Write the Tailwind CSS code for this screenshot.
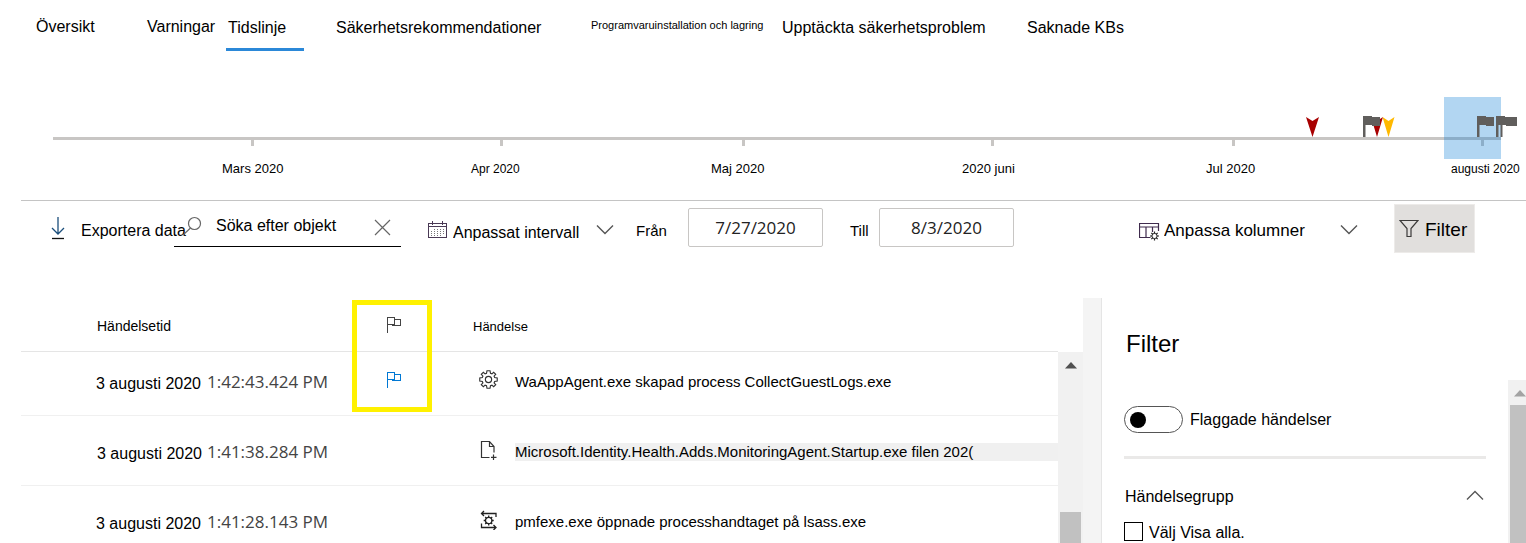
<!DOCTYPE html>
<html lang="sv">
<head>
<meta charset="utf-8">
<title>Tidslinje</title>
<script src="https://cdn.jsdelivr.net/npm/@tailwindcss/browser@4"></script>
</head>
<body class="flex h-screen flex-col overflow-hidden bg-white font-['Liberation_Sans',Arial,sans-serif] text-base text-black">

<nav class="flex h-[52px] shrink-0 items-start pt-4 pl-9 leading-[22px] whitespace-nowrap">
  <a href="#" class="w-[111px]">Översikt</a>
  <a href="#" class="w-[79px]">Varningar</a>
  <a href="#" aria-current="page" class="mr-8 h-[35px] w-[78px] border-b-3 border-[#2b88d8] pl-[2px] leading-6">Tidslinje</a>
  <a href="#" class="w-[255px] leading-6">Säkerhetsrekommendationer</a>
  <a href="#" class="w-[191px] text-[11px] leading-[18px]">Programvaruinstallation och lagring</a>
  <a href="#" class="w-[245px] leading-6">Upptäckta säkerhetsproblem</a>
  <a href="#" class="leading-6">Saknade KBs</a>
</nav>

<section aria-label="Tidslinje" class="shrink-0 pt-[85px]">
  <div class="relative mr-[25px] ml-[53px] h-[9px] border-t-3 border-[#c8c6c4]">
    <div class="grid h-[6px] grid-cols-[198fr_249fr_242fr_249fr_241fr_249fr_20fr]">
      <span></span>
      <span class="border-l-3 border-[#c8c6c4]"></span>
      <span class="border-l-3 border-[#c8c6c4]"></span>
      <span class="border-l-3 border-[#c8c6c4]"></span>
      <span class="border-l-3 border-[#c8c6c4]"></span>
      <span class="border-l-3 border-[#c8c6c4]"></span>
      <span class="border-l-3 border-[#c8c6c4]"></span>
    </div>
    <!-- selected range and event pins -->
    <div class="absolute -top-[43px] right-0 h-[62px] w-[57px] bg-[#0078d4]/30"></div>
    <svg class="absolute -top-[27px] -right-[17px]" width="213" height="25" viewBox="1305 113 213 25">
      <path fill="#a80000" d="M1306 117l6.500 4 6.500-4-6.500 20z"/>
      <path fill="#a80000" d="M1371 117l6 4 6-4-6 20z"/>
      <path fill="#ffb900" d="M1382.500 117l6 4 6-4-6 20z"/>
      <g fill="#605e5c">
        <path d="M1363 116h9v1h8v9h-8v-1h-6.500v12h-2.500z"/>
        <path d="M1477 116h9v1h8v9h-8v-1h-6.500v12h-2.500z"/>
        <path d="M1496 116h9v1h12v9h-11v-1h-7.500v12h-2.500z"/>
        <path d="M1500.500 124h2v13h-2z"/>
      </g>
    </svg>
  </div>
  <div class="ml-[222px] grid h-[54px] grid-cols-[249fr_240fr_251fr_244fr_245fr_75fr] pt-[14px] text-[13px] leading-[18px] whitespace-nowrap">
    <span>Mars 2020</span>
    <span class="text-xs leading-[18px]">Apr 2020</span>
    <span>Maj 2020</span>
    <span>2020 juni</span>
    <span>Jul 2020</span>
    <span class="text-xs leading-[18px]">augusti 2020</span>
  </div>
</section>

<div class="ml-[21px] flex h-[98px] shrink-0 items-start border-t border-[#c4c4c4] pl-[28px] whitespace-nowrap">
  <button type="button" class="flex h-[58px] w-[125px] items-center gap-[14px]">
    <svg class="mb-1 shrink-0" width="18" height="24" viewBox="0 0 18 24" fill="none"><path stroke="#1c4f7c" stroke-width="1.300" d="M9 1v17M3 12l6 6 6-6"/><path stroke="#111" stroke-width="1.300" d="M3 22.500h12"/></svg>
    <span class="pt-px">Exportera data</span>
  </button>
  <label class="mt-1 flex h-[42px] w-[227px] items-center border-b border-black pl-2">
    <svg class="shrink-0" width="20" height="20" viewBox="0 0 20 20" fill="none" stroke="#666" stroke-width="1.200"><circle cx="12.500" cy="7.500" r="6"/><path d="M8.500 12L1 19"/></svg>
    <input type="text" aria-label="Sök" placeholder="Söka efter objekt" class="ml-[14px] w-[150px] outline-none placeholder:text-black">
    <svg class="mt-1 ml-2 shrink-0" width="17" height="17" viewBox="0 0 17 17" fill="none" stroke="#666" stroke-width="1.200"><path d="M1 1l15 15M16 1L1 16"/></svg>
  </label>
  <div class="relative ml-[27px] flex h-[60px] w-[188px] items-center">
    <svg class="mr-[2px] mb-[2px] shrink-0" width="19" height="20" viewBox="0 0 19 20" fill="none" shape-rendering="crispEdges"><path stroke="#4a3a55" d="M.5 3.500h18v14H.5zM.5 6.500h18M4.500 1v4M14.500 1v4"/><path stroke="#777" stroke-dasharray="1 2" d="M6 9.500h10M3 11.500h13M3 13.500h13M3 15.500h10"/></svg>
    <select aria-label="Intervall" class="w-full appearance-none bg-transparent pt-[3px] pl-1 outline-none"><option>Anpassat intervall</option></select>
    <svg class="pointer-events-none absolute top-[23px] right-[2px]" width="18" height="11" viewBox="0 0 18 11" fill="none" stroke="#555" stroke-width="1.400"><path d="M1 1.500l8 8 8-8"/></svg>
  </div>
  <label for="from" class="ml-5 w-[52px] text-[15px] leading-[60px]">Från</label>
  <input id="from" type="text" value="7/27/2020" class="mt-[7px] h-[39px] w-[135px] rounded-xs border border-[#c8c6c4] text-center font-['Open_Sans',sans-serif] text-[17px] text-[#222]">
  <label for="to" class="ml-[27px] w-[29px] text-[15px] leading-[60px]">Till</label>
  <input id="to" type="text" value="8/3/2020" class="mt-[7px] h-[39px] w-[135px] rounded-xs border border-[#c8c6c4] text-center font-['Open_Sans',sans-serif] text-[17px] text-[#222]">
  <div class="relative ml-auto flex h-[60px] w-[219px] items-center">
    <svg class="shrink-0" width="21" height="20" viewBox="0 0 21 20" fill="none"><path stroke="#3f2b4d" stroke-width="1.200" d="M19.500 10V2.500h-19v14h11M.5 6h19M7 6v10.500M13.500 6v5"/><circle cx="15.500" cy="15" r="2.600" stroke="#222"/><path stroke="#222" stroke-width="1.200" d="M15.500 10.500v2M15.500 17.500v2M11 15h2M18 15h2M12.300 11.800l1.400 1.400M17.300 16.800l1.400 1.400M18.700 11.800l-1.400 1.400M13.700 16.800l-1.400 1.400"/></svg>
    <select aria-label="Anpassa kolumner" class="w-full appearance-none bg-transparent pl-1 text-[17px] outline-none"><option>Anpassa kolumner</option></select>
    <svg class="pointer-events-none absolute top-[23px] right-0" width="18" height="11" viewBox="0 0 18 11" fill="none" stroke="#555" stroke-width="1.400"><path d="M1 1.500l8 8 8-8"/></svg>
  </div>
  <button type="button" class="mt-[3px] mr-[51px] ml-9 flex h-[49px] w-[81px] items-center gap-[6px] border border-[#edebe9] bg-[#e1dfdd] pl-1 text-[19px]">
    <svg class="shrink-0" width="20" height="19" viewBox="0 0 20 19" fill="none" stroke="#3b3a39" stroke-width="1.200"><path d="M1 1.500h18l-7 8V17.500H8v-8z"/></svg>
    <span class="pt-[3px]">Filter</span>
  </button>
</div>

<main class="flex min-h-0 flex-1">
  <div class="relative ml-[21px] flex min-w-0 flex-1 items-stretch overflow-hidden">
    <div class="min-w-0 flex-1">
      <table class="w-full table-fixed border-collapse text-left whitespace-nowrap">
        <colgroup><col class="w-[331px]"><col class="w-[80px]"><col></colgroup>
        <thead>
          <tr class="h-[53px] border-b border-[#e5e5e5]">
            <th scope="col" class="pt-1 pl-[76px] text-sm font-normal">Händelsetid</th>
            <th scope="col" aria-label="Flagga" class="pl-[35px]">
              <svg width="14" height="17" viewBox="0 0 14 17" fill="none" stroke="#444" shape-rendering="crispEdges"><path d="M.5 17V1.500h7v7H.5M7.500 3.500h5.500v6H5.500V8.500"/></svg>
            </th>
            <th scope="col" class="pt-1 pl-[41px] text-[13px] font-normal">Händelse</th>
          </tr>
        </thead>
        <tbody>
          <tr class="h-16 border-b border-[#f0f0f0]">
            <td class="pb-[3px] pl-[75px]"><div class="flex items-center gap-[6px]"><span class="pt-1">3 augusti 2020</span><span class="font-['Open_Sans',sans-serif] text-[17px] leading-6 text-[#444]">1:42:43.424 PM</span></div></td>
            <td class="pb-2 pl-[35px]"><svg width="14" height="17" viewBox="0 0 14 17" fill="none" stroke="#0078d4" shape-rendering="crispEdges"><path d="M.5 17V1.500h7v7H.5M7.500 3.500h5.500v6H5.500V8.500"/></svg></td>
            <td class="pb-[3px] pl-[47px]"><div class="flex items-center gap-[17px]">
              <svg class="mb-1 shrink-0" width="19" height="19" viewBox="-10 -10 20 20" fill="none" stroke="#333" stroke-width="1.200"><circle r="3.300"/><path d="M-1.600-9.200H1.600L2.100-6.500 3.600-5.900 5.400-7.600 7.600-5.400 5.900-3.600 6.500-2.100 9.200-1.600V1.600L6.500 2.100 5.900 3.600 7.600 5.400 5.400 7.600 3.600 5.900 2.100 6.500 1.600 9.200H-1.600L-2.100 6.500-3.600 5.900-5.400 7.600-7.600 5.400-5.900 3.600-6.500 2.100-9.200 1.600V-1.600L-6.500-2.100-5.900-3.600-7.600-5.400-5.400-7.600-3.600-5.900-2.100-6.500z"/></svg>
              <span class="text-[15px] leading-[18px]">WaAppAgent.exe skapad process CollectGuestLogs.exe</span></div></td>
          </tr>
          <tr class="h-[70px] border-b border-[#f0f0f0]">
            <td class="pt-[3px] pl-[76px]"><div class="flex items-center gap-[5px]"><span class="pt-1">3 augusti 2020</span><span class="font-['Open_Sans',sans-serif] text-[17px] leading-6 text-[#444]">1:41:38.284 PM</span></div></td>
            <td></td>
            <td class="pt-[3px] pl-[47px]"><div class="flex items-center gap-[17px]">
              <svg class="mb-1 shrink-0" width="19" height="20" viewBox="0 0 19 20" fill="none" stroke="#333" stroke-width="1.200"><path d="M10.500 17.500h-8V1.500h8l4.500 5V12.500M10.500 1.500v5H15M14.500 14.500v5.500M12 17.300h5.500"/></svg>
              <span class="flex-1 bg-[#f0f0f0] text-[15px] leading-[18px]">Microsoft.Identity.Health.Adds.MonitoringAgent.Startup.exe filen 202(</span></div></td>
          </tr>
          <tr class="h-[70px]">
            <td class="pt-[3px] pl-[75px]"><div class="flex items-center gap-[6px]"><span class="pt-1">3 augusti 2020</span><span class="font-['Open_Sans',sans-serif] text-[17px] leading-6 text-[#444]">1:41:28.143 PM</span></div></td>
            <td></td>
            <td class="pt-[3px] pl-[47px]"><div class="flex items-center gap-[17px]">
              <svg class="mb-1 shrink-0" width="19" height="20" viewBox="0 0 19 20" fill="none" stroke="#222" stroke-width="1.300"><path d="M17 7V3.500H3M5 1L2.500 3.500 5 6M2.500 13.500v4H16M14.500 15l2.500 2.500-2.500 2.500"/><circle cx="9.700" cy="10.500" r="3.200"/><path d="M9.700 5.500v2M9.700 13.500v2M4.700 10.500h2M12.700 10.500h2M6.200 7l1.400 1.400M11.800 12.600l1.400 1.400M13.200 7l-1.400 1.400M7.600 12.600L6.200 14"/></svg>
              <span class="text-[15px] leading-[18px]">pmfexe.exe öppnade processhandtaget på lsass.exe</span></div></td>
          </tr>
        </tbody>
      </table>
    </div>
    <!-- table scroll bar -->
    <div class="mt-[54px] flex w-[25px] shrink-0 flex-col items-center bg-[#f1f1f1] pt-[10px]">
      <svg class="shrink-0" width="12" height="7" viewBox="0 0 12 7"><path fill="#505050" d="M6 0l6 6.500H0z"/></svg>
      <div class="mt-[143px] w-[21px] flex-1 bg-[#c1c1c1]"></div>
    </div>
    <div class="w-[19px] shrink-0 border-r border-[#e5e5e5] bg-[#f4f4f4]"></div>
    <!-- highlight round the flag column -->
    <div class="pointer-events-none absolute top-[2px] left-[331px] h-[112px] w-[80px] border-5 border-[#fff100]"></div>
  </div>

  <aside class="flex w-[424px] shrink-0 flex-col">
    <h2 class="h-[82px] shrink-0 pt-[31px] pl-6 text-2xl leading-[30px]">Filter</h2>
    <div class="flex flex-1">
      <div class="flex-1 pr-[22px] pl-[22px]">
        <div class="flex h-[76px] items-center gap-[7px] pt-[3px]">
          <button type="button" role="switch" aria-checked="false" aria-labelledby="flagged" class="flex h-[27px] w-[59px] items-center rounded-full border border-[#555] pl-[5px]"><span class="size-4 rounded-full bg-black"></span></button>
          <span id="flagged">Flaggade händelser</span>
        </div>
        <div class="border-t-3 border-[#eae9e8]"></div>
        <button type="button" aria-expanded="true" class="flex w-full items-center justify-between pt-[26px] pr-[2px] pl-[1px] leading-6">
          Händelsegrupp
          <svg class="mb-1" width="18" height="11" viewBox="0 0 18 11" fill="none" stroke="#555" stroke-width="1.300"><path d="M1 9.500l8-8 8 8"/></svg>
        </button>
        <label class="flex items-center gap-[6px] pt-[12px] leading-6"><input type="checkbox" class="mb-1 size-[19px] appearance-none border border-black bg-white">Välj Visa alla.</label>
      </div>
      <div class="flex w-[18px] shrink-0 flex-col items-end bg-[#f1f1f1] pt-[10px]">
        <svg class="shrink-0" width="12" height="7" viewBox="0 0 12 7"><path fill="#a3a3a3" d="M6 0l6 6.500H0z"/></svg>
        <div class="mt-2 w-4 flex-1 bg-[#c1c1c1]"></div>
      </div>
    </div>
  </aside>
</main>
</body>
</html>
